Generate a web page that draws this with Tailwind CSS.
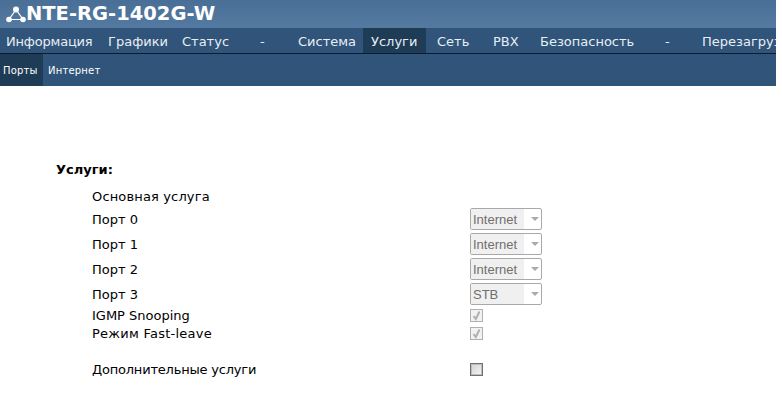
<!DOCTYPE html>
<html lang="ru">
<head>
    <meta charset="UTF-8">
    <title>NTE-RG-1402G-W</title>
    <script src="https://cdn.jsdelivr.net/npm/@tailwindcss/browser@4"></script>
</head>
<body class="bg-white text-black font-['DejaVu_Sans',sans-serif] overflow-hidden">
    <div class="w-[776px] h-[416px] overflow-hidden">
        <!-- Title -->
        <header class="h-[28px] bg-gradient-to-b from-[#4a6f97] to-[#557aa1] flex items-center pl-[6px] text-white">
            <svg width="20" height="17" viewBox="0 0 20 17" class="shrink-0">
                <path d="M10 3.5 L3 13.5 H17 Z" fill="none" stroke="#fff" stroke-width="1.2"/>
                <circle cx="10" cy="3.5" r="3" fill="#fff"/>
                <circle cx="3" cy="13.5" r="2.8" fill="#fff"/>
                <circle cx="17" cy="13.5" r="2.8" fill="#fff"/>
            </svg>
            <h1 class="text-[19.5px] font-bold leading-none whitespace-nowrap">NTE-RG-1402G-W</h1>
        </header>

        <!-- Main menu -->
        <nav class="h-[26px] bg-[#30547a] border-b border-[#0c1c2c] flex text-[13px] leading-[27px] text-[#e8eef4] whitespace-nowrap overflow-hidden">
            <a class="shrink-0 w-[100px] pl-[6px] tracking-[-0.2px]">Информация</a>
            <a class="shrink-0 w-[74px] pl-[8px]">Графики</a>
            <a class="shrink-0 w-[72px] pl-[8px]">Статус</a>
            <a class="shrink-0 w-[52px] pl-[14px]">-</a>
            <a class="shrink-0 w-[65px]">Система</a>
            <a class="shrink-0 w-[63px] pl-[8px] bg-[#1e3c56]">Услуги</a>
            <a class="shrink-0 w-[58px] pl-[11px]">Сеть</a>
            <a class="shrink-0 w-[55px] pl-[9px]">PBX</a>
            <a class="shrink-0 w-[120px] pl-[1px]">Безопасность</a>
            <a class="shrink-0 w-[37px] pl-[6px]">-</a>
            <a class="shrink-0 pl-[6px]">Перезагрузка</a>
        </nav>

        <!-- Sub menu -->
        <nav class="h-[32px] bg-[#30547a] flex text-[10px] leading-[33px] tracking-[0.2px] text-white whitespace-nowrap">
            <a class="w-[43px] pl-[3px] bg-[#1e3c56]">Порты</a>
            <a class="pl-[5px]">Интернет</a>
        </nav>

        <!-- Services form -->
        <main class="pl-[56px] pt-[76px] text-[13px] leading-[16px]">
            <h2 class="font-bold h-[25px] text-[13px]">Услуги:</h2>
            <div class="pl-[36px]">
                <div class="h-[20px] tracking-[0.15px] flex items-center">Основная услуга</div>
                <div class="grid grid-cols-[378px_72px] items-center">
                    <span class="h-[25px] flex items-center">Порт 0</span>
                    <div class="self-start mt-[1px] w-[72px] h-[22px] border border-[#a9a9a9] rounded-[2px] flex items-center bg-white text-[#6f6f6f] text-[13px] font-['Liberation_Sans',sans-serif]">
                        <span class="w-[53px] h-[20px] bg-[#f0f0f0] pl-[2px] leading-[22px]">Internet</span>
                        <span class="ml-[7px] border-x-[4px] border-x-transparent border-t-[4px] border-t-[#aaa]"></span>
                    </div>
                    <span class="h-[25px] flex items-center">Порт 1</span>
                    <div class="self-start mt-[1px] w-[72px] h-[22px] border border-[#a9a9a9] rounded-[2px] flex items-center bg-white text-[#6f6f6f] text-[13px] font-['Liberation_Sans',sans-serif]">
                        <span class="w-[53px] h-[20px] bg-[#f0f0f0] pl-[2px] leading-[22px]">Internet</span>
                        <span class="ml-[7px] border-x-[4px] border-x-transparent border-t-[4px] border-t-[#aaa]"></span>
                    </div>
                    <span class="h-[25px] flex items-center">Порт 2</span>
                    <div class="self-start mt-[1px] w-[72px] h-[22px] border border-[#a9a9a9] rounded-[2px] flex items-center bg-white text-[#6f6f6f] text-[13px] font-['Liberation_Sans',sans-serif]">
                        <span class="w-[53px] h-[20px] bg-[#f0f0f0] pl-[2px] leading-[22px]">Internet</span>
                        <span class="ml-[7px] border-x-[4px] border-x-transparent border-t-[4px] border-t-[#aaa]"></span>
                    </div>
                    <span class="h-[25px] flex items-center">Порт 3</span>
                    <div class="self-start mt-[1px] w-[72px] h-[22px] border border-[#a9a9a9] rounded-[2px] flex items-center bg-white text-[#6f6f6f] text-[13px] font-['Liberation_Sans',sans-serif]">
                        <span class="w-[53px] h-[20px] bg-[#f0f0f0] pl-[2px] leading-[22px]">STB</span>
                        <span class="ml-[7px] border-x-[4px] border-x-transparent border-t-[4px] border-t-[#aaa]"></span>
                    </div>
                    <span class="h-[18px] flex items-center">IGMP Snooping</span>
                    <div class="w-[13px] h-[13px] mb-[2px] border border-[#b0b0b0] bg-[#f2f2f2] flex items-center justify-center">
                        <svg width="11" height="11" viewBox="0 0 11 11"><path d="M2.5 6 L4.8 9 L8.5 1.5" fill="none" stroke="#b0b0b0" stroke-width="2"/></svg>
                    </div>
                    <span class="h-[18px] tracking-[0.25px] flex items-center">Режим Fast-leave</span>
                    <div class="w-[13px] h-[13px] mb-[2px] border border-[#b0b0b0] bg-[#f2f2f2] flex items-center justify-center">
                        <svg width="11" height="11" viewBox="0 0 11 11"><path d="M2.5 6 L4.8 9 L8.5 1.5" fill="none" stroke="#b0b0b0" stroke-width="2"/></svg>
                    </div>
                    <span class="h-[18px] mt-[18px] tracking-[-0.2px] flex items-center">Дополнительные услуги</span>
                    <div class="w-[13px] h-[13px] mt-[16px] border border-[#707070] bg-gradient-to-br from-[#d0d0d6] to-[#f6f6f6] ring-1 ring-inset ring-[#bdbdbd]"></div>
                </div>
            </div>
        </main>
    </div>
</body>
</html>
